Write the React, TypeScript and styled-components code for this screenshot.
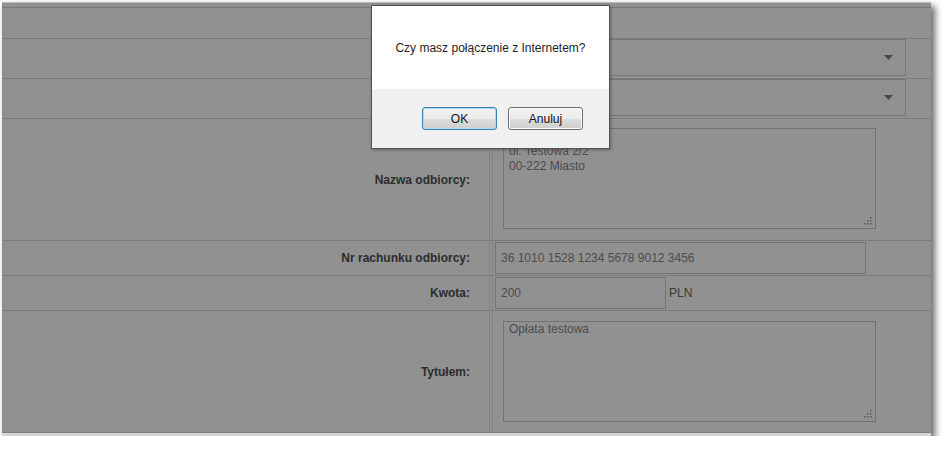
import styled, { createGlobalStyle } from 'styled-components';

const GlobalStyle = createGlobalStyle`
  html, body {
    margin: 0;
    padding: 0;
    background: #fff;
  }
  body {
    font-family: "Liberation Sans", Arial, sans-serif;
    font-size: 12px;
  }
`;

const Shot = styled.div`
  position: relative;
  box-sizing: border-box;
  width: 929px;
  height: 434px;
  margin: 2px 0 0 2px;
  background: #fff;
  border-top: 1px solid #bdbdbd;
  border-bottom: 3px solid #d6d6d6;
  box-shadow: 4px 4px 7px rgba(0, 0, 0, 0.6);
  overflow: hidden;
`;

const TopBar = styled.div`
  height: 4px;
  border-bottom: 1px solid #d4d4d4;
`;

const Row = styled.div<{ $h: number }>`
  box-sizing: border-box;
  display: grid;
  grid-template-columns: 488px 1fr;
  column-gap: 2px;
  height: ${(p) => p.$h}px;
  border-bottom: 1px solid #dadada;
`;

const LabelCell = styled.div`
  display: flex;
  align-items: center;
  justify-content: flex-end;
  padding-right: 19px;
  border-right: 1px solid #e4e4e4;
  font-weight: bold;
  color: #505050;
`;

const ValueCell = styled.div<{ $top?: number }>`
  display: flex;
  align-items: flex-start;
  padding: ${(p) => p.$top ?? 0}px 0 0 2px;
  border-left: 1px solid #e4e4e4;
`;

const SelectBox = styled.div`
  position: relative;
  box-sizing: border-box;
  width: 411px;
  height: 37px;
  border: 1px solid #cfcfcf;
  background: #fff;
`;

const SelectArrow = styled.svg`
  position: absolute;
  right: 12px;
  top: 15px;
  width: 9px;
  height: 5px;
`;

const TextInput = styled.input<{ $w: number }>`
  box-sizing: border-box;
  width: ${(p) => p.$w}px;
  height: 32px;
  margin: 0;
  padding: 0 5px;
  border: 1px solid #cccccc;
  font-family: "Liberation Sans", Arial, sans-serif;
  font-size: 12px;
  color: #888;
  background: #fff;
`;

const Unit = styled.span`
  margin-left: 3px;
  line-height: 32px;
  color: #666;
`;

const AreaWrap = styled.div`
  position: relative;
  margin-left: 8px;
`;

const TextArea = styled.textarea`
  display: block;
  box-sizing: border-box;
  width: 373px;
  height: 101px;
  margin: 0;
  padding: 0 5px;
  border: 1px solid #c8c8c8;
  font-family: "Liberation Sans", Arial, sans-serif;
  font-size: 12px;
  line-height: 15px;
  color: #888;
  background: #fff;
  resize: none;
  overflow: hidden;
`;

const Grip = styled.svg`
  position: absolute;
  right: 4px;
  bottom: 4px;
  width: 9px;
  height: 9px;
`;

const Overlay = styled.div`
  position: absolute;
  inset: 0;
  background: rgba(0, 0, 0, 0.43);
`;

const Dialog = styled.div`
  position: absolute;
  left: 369px;
  top: 2px;
  box-sizing: border-box;
  width: 239px;
  height: 144px;
  display: flex;
  flex-direction: column;
  border: 1px solid #525252;
  background: #fff;
  box-shadow: 1px 1px 3px rgba(0, 0, 0, 0.3);
`;

const DialogBody = styled.div`
  height: 83px;
  display: flex;
  align-items: center;
  justify-content: center;
  color: #1e1e1e;
`;

const DialogFooter = styled.div`
  flex: 1;
  display: flex;
  align-items: center;
  justify-content: flex-end;
  gap: 11px;
  padding-right: 26px;
  background: #f0f0f0;
`;

const Button = styled.button<{ $focused?: boolean }>`
  box-sizing: border-box;
  width: 75px;
  height: 23px;
  padding: 0;
  border-radius: 3px;
  font-family: "Liberation Sans", Arial, sans-serif;
  font-size: 12px;
  color: #111;
  border: 1px solid ${(p) => (p.$focused ? '#3c7fb1' : '#707070')};
  box-shadow: inset 0 0 0 1px ${(p) => (p.$focused ? '#a6dcf6' : '#fbfbfb')};
  background: linear-gradient(#f2f2f2 0%, #ebebeb 50%, #dddddd 51%, #cfcfcf 100%);
`;

function Grips() {
  const dots = [
    [7, 1],
    [4, 4],
    [7, 4],
    [1, 7],
    [4, 7],
    [7, 7],
  ];
  return (
    <Grip viewBox="0 0 9 9">
      {dots.map(([x, y]) => (
        <rect key={`${x}-${y}`} x={x} y={y} width="1.5" height="1.5" fill="#9a9a9a" />
      ))}
    </Grip>
  );
}

function Arrow() {
  return (
    <SelectArrow viewBox="0 0 9 5">
      <polygon points="0,0 9,0 4.5,5" fill="#7a7a7a" />
    </SelectArrow>
  );
}

export default function App() {
  return (
    <>
      <GlobalStyle />
      <Shot>
        <TopBar />
        <Row $h={31}>
          <LabelCell />
          <ValueCell />
        </Row>
        <Row $h={40}>
          <LabelCell />
          <ValueCell>
            <SelectBox>
              <Arrow />
            </SelectBox>
          </ValueCell>
        </Row>
        <Row $h={40}>
          <LabelCell />
          <ValueCell>
            <SelectBox>
              <Arrow />
            </SelectBox>
          </ValueCell>
        </Row>
        <Row $h={122}>
          <LabelCell>Nazwa odbiorcy:</LabelCell>
          <ValueCell $top={9}>
            <AreaWrap>
              <TextArea readOnly value={'\nul. Testowa 2/2\n00-222 Miasto'} />
              <Grips />
            </AreaWrap>
          </ValueCell>
        </Row>
        <Row $h={35}>
          <LabelCell>Nr rachunku odbiorcy:</LabelCell>
          <ValueCell $top={1}>
            <TextInput $w={371} readOnly value="36 1010 1528 1234 5678 9012 3456" />
          </ValueCell>
        </Row>
        <Row $h={35}>
          <LabelCell>Kwota:</LabelCell>
          <ValueCell $top={1}>
            <TextInput $w={171} readOnly value="200" />
            <Unit>PLN</Unit>
          </ValueCell>
        </Row>
        <Row $h={122}>
          <LabelCell>Tytułem:</LabelCell>
          <ValueCell $top={10}>
            <AreaWrap>
              <TextArea readOnly value="Opłata testowa" />
              <Grips />
            </AreaWrap>
          </ValueCell>
        </Row>
        <Overlay />
        <Dialog>
          <DialogBody>Czy masz połączenie z Internetem?</DialogBody>
          <DialogFooter>
            <Button $focused>OK</Button>
            <Button>Anuluj</Button>
          </DialogFooter>
        </Dialog>
      </Shot>
    </>
  );
}
